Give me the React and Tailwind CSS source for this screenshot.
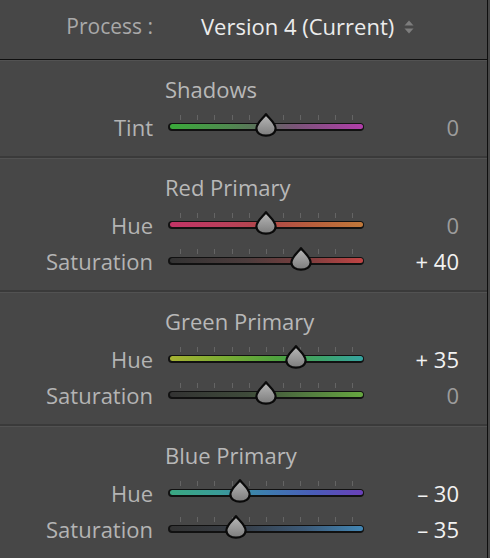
import React from "react";

const TICKS = [0, 1, 2, 3, 4, 5, 6, 7, 8, 9, 10];

function Thumb() {
  return (
    <svg width="22" height="24" viewBox="0 0 22 24" className="block">
      <defs>
        <linearGradient id="thumbGrad" x1="0" y1="0" x2="0" y2="1">
          <stop offset="0" stopColor="#b9b9b9" />
          <stop offset="1" stopColor="#7c7c7c" />
        </linearGradient>
      </defs>
      <path
        d="M11 1.2 C13.5 5 20.6 10 20.6 15.6 C20.6 20.3 16 22.7 11 22.7 C6 22.7 1.4 20.3 1.4 15.6 C1.4 10 8.5 5 11 1.2 Z"
        fill="url(#thumbGrad)"
        stroke="#0a0a0a"
        strokeWidth="2.2"
        strokeLinejoin="round"
      />
    </svg>
  );
}

function Slider({ value, gradient }) {
  const left = 98 + (value / 100) * 87;
  return (
    <div className="relative w-[196px] h-[26px]">
      <div className="absolute left-0 top-[1px] w-[196px] h-[5px]">
        {TICKS.map((t) => (
          <div
            key={t}
            className="absolute top-0 w-[1px] h-[5px] bg-[#646464]"
            style={{ left: 12 + t * 17.2 }}
          />
        ))}
      </div>
      <div className="absolute left-0 top-[9px] w-[196px] h-[8px] rounded-full bg-[#111111] p-[1.5px]">
        <div className="w-full h-full rounded-full" style={{ background: gradient }} />
      </div>
      <div className="absolute top-[-1px]" style={{ left: left - 11 }}>
        <Thumb />
      </div>
    </div>
  );
}

function Row({ label, value, gradient, display }) {
  const active = value !== 0;
  return (
    <div className="flex items-center h-[36px]">
      <div className="w-[153px] text-right text-[22px] text-[#b4b4b4] leading-none">{label}</div>
      <div className="ml-[15px] mt-[-1px]">
        <Slider value={value} gradient={gradient} />
      </div>
      <div
        className={
          "w-[95px] text-right text-[22px] leading-none " +
          (active ? "text-[#f2f2f2]" : "text-[#9c9c9c]")
        }
      >
        {display}
      </div>
    </div>
  );
}

function Section({ title, rows, last }) {
  return (
    <div
      className={
        "pt-[16px] pb-[11px] border-t border-[#525252] " +
        (last ? "" : "border-b-2 border-b-[#3a3a3a]")
      }
    >
      <div className="h-[24px] flex items-center pl-[165px] text-[22px] text-[#b8b8b8] leading-none">
        {title}
      </div>
      <div className="mt-[8px]">
        {rows.map((r) => (
          <Row key={r.label} {...r} />
        ))}
      </div>
    </div>
  );
}

export default function App() {
  const sections = [
    {
      title: "Shadows",
      rows: [
        {
          label: "Tint",
          value: 0,
          display: "0",
          gradient:
            "linear-gradient(to right, #3aa93a 0%, #4f8a4f 30%, #5f6a5f 50%, #7a5478 65%, #b13eaa 100%)",
        },
      ],
    },
    {
      title: "Red Primary",
      rows: [
        {
          label: "Hue",
          value: 0,
          display: "0",
          gradient:
            "linear-gradient(to right, #c23466 0%, #b8405a 30%, #b04848 50%, #b8603c 75%, #c0783a 100%)",
        },
        {
          label: "Saturation",
          value: 40,
          display: "+ 40",
          gradient:
            "linear-gradient(to right, #333333 0%, #4c3c3c 40%, #7a3e3e 70%, #c04444 100%)",
        },
      ],
    },
    {
      title: "Green Primary",
      rows: [
        {
          label: "Hue",
          value: 35,
          display: "+ 35",
          gradient:
            "linear-gradient(to right, #a6b232 0%, #78ac34 30%, #4fa23e 55%, #3ca36e 80%, #35a3a0 100%)",
        },
        {
          label: "Saturation",
          value: 0,
          display: "0",
          gradient:
            "linear-gradient(to right, #333333 0%, #3e4a3a 40%, #527a40 70%, #66a640 100%)",
        },
      ],
    },
    {
      title: "Blue Primary",
      rows: [
        {
          label: "Hue",
          value: -30,
          display: "– 30",
          gradient:
            "linear-gradient(to right, #3aa882 0%, #3a9c98 25%, #3e7cb0 50%, #4a5cb8 75%, #6a40b8 100%)",
        },
        {
          label: "Saturation",
          value: -35,
          display: "– 35",
          gradient:
            "linear-gradient(to right, #333333 0%, #363c44 35%, #3c5a78 70%, #4286b4 100%)",
        },
      ],
    },
  ];

  return (
    <div
      className="w-[490px] h-[558px] bg-[#474747] overflow-hidden"
      style={{ fontFamily: '"Open Sans", "Noto Sans", sans-serif' }}
    >
      <div className="w-[488px] h-full border-r border-[#0e0e0e]">
        <div className="h-[60px] border-b border-[#0f0f0f] flex items-center pb-[7px]">
          <div className="w-[153px] text-right text-[21px] text-[#a9a9a9] leading-none">
            Process :
          </div>
          <div className="ml-[48px] text-[22px] text-[#ececec] leading-none">
            Version 4 (Current)
          </div>
          <svg width="10" height="14" viewBox="0 0 10 14" className="ml-[10px] mt-[2px]">
            <path d="M5 0.5 L9.5 5.5 L0.5 5.5 Z" fill="#7d7d7d" />
            <path d="M0.5 8.5 L9.5 8.5 L5 13.5 Z" fill="#7d7d7d" />
          </svg>
        </div>
        {sections.map((s, i) => (
          <Section key={s.title} {...s} last={i === sections.length - 1} />
        ))}
      </div>
    </div>
  );
}
